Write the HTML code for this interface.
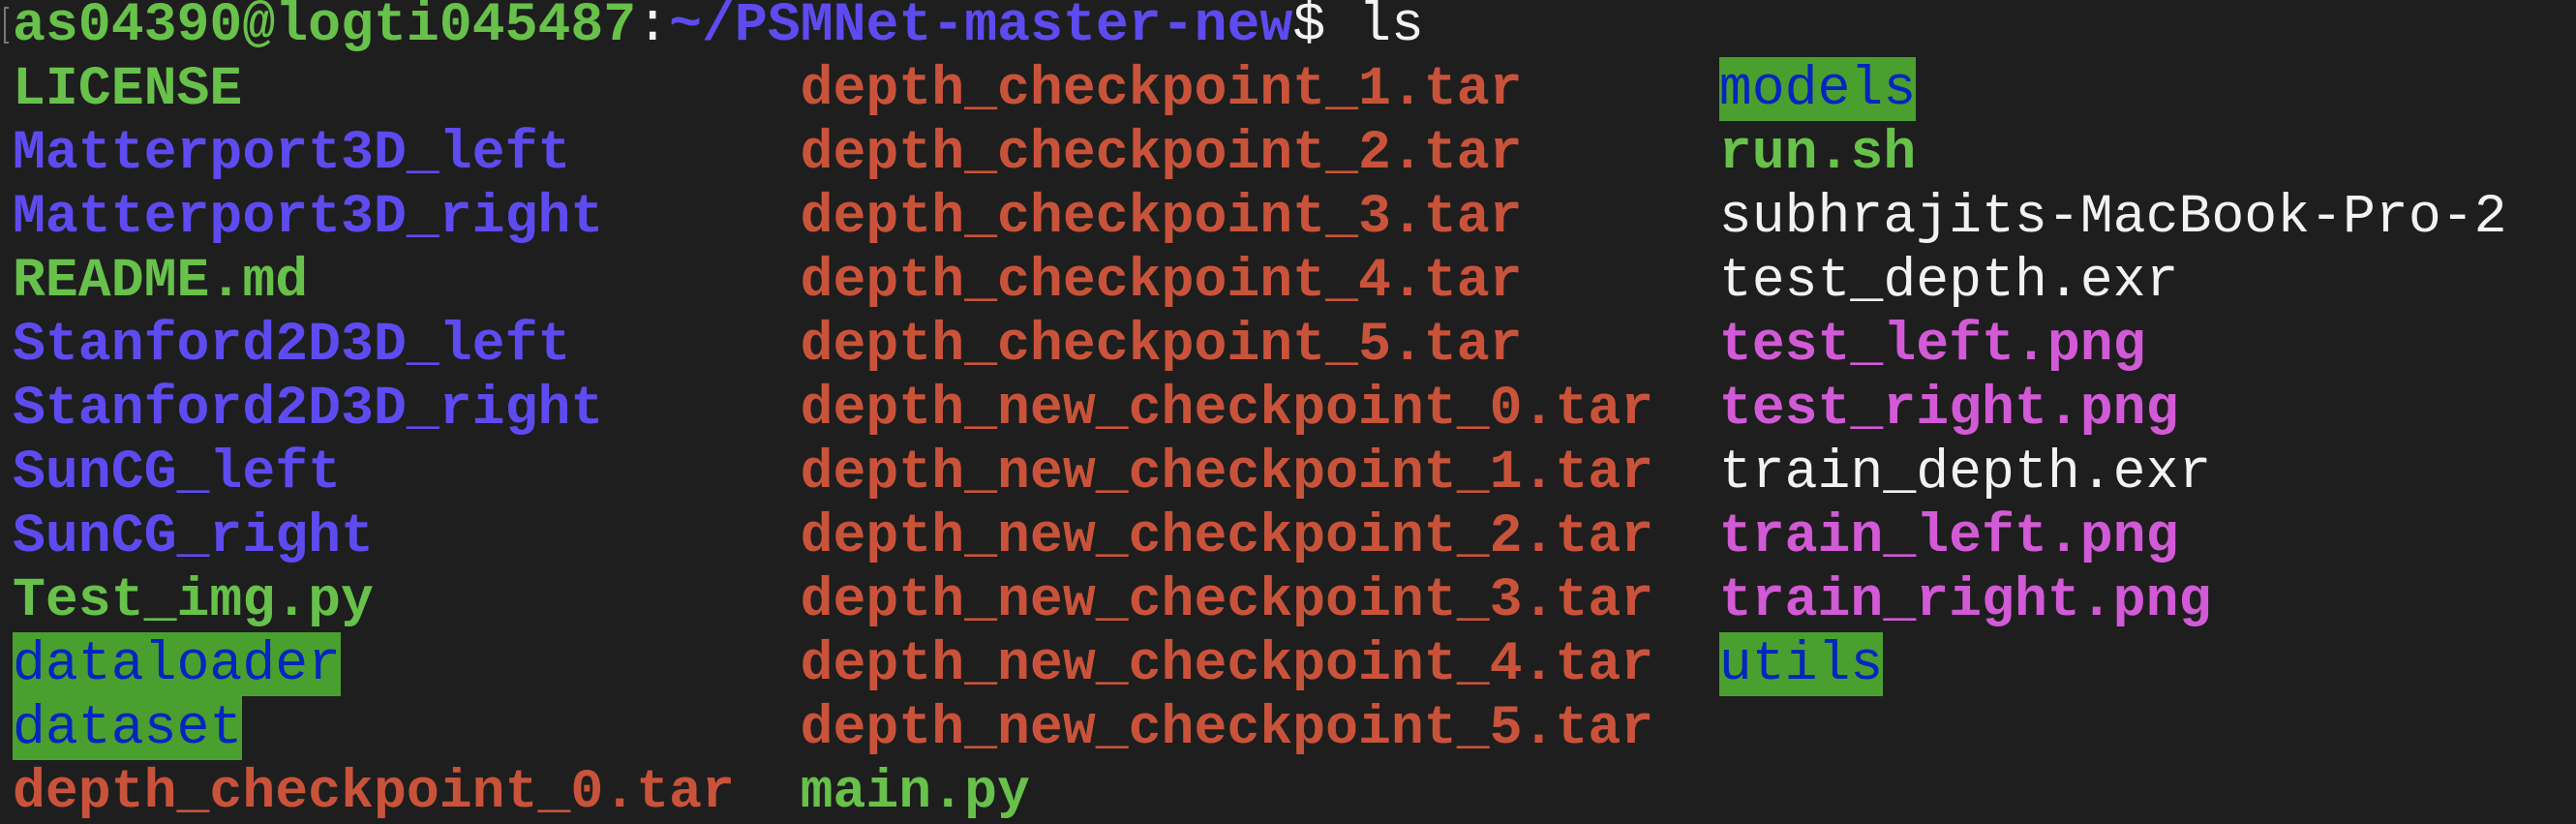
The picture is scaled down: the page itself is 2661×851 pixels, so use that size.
<!DOCTYPE html>
<html><head><meta charset="utf-8"><style>
html,body{margin:0;padding:0;background:#1e1e1e;width:2661px;height:848px;overflow:hidden}
#t{position:absolute;left:13px;top:-7px;font-family:"Liberation Mono",monospace;font-size:56.5px;color:#f2f2f2}
.l{height:66px;line-height:66px;position:relative;white-space:pre}
.c{position:absolute;top:0;height:66px}
.c2{left:813.6px}.c3{left:1762.8px}
.g{color:#67c14a;font-weight:bold}
.p{color:#5e4bf0;font-weight:bold}
.r{color:#c9533a;font-weight:bold}
.m{color:#d25ad6;font-weight:bold}
.d{background:#4aa02f;color:#0525c0;display:inline-block;height:66px;vertical-align:top}
.w{color:#f2f2f2}
#br{position:absolute;left:4px;top:7px;height:38px;border:2px solid #777;border-right:none;box-sizing:border-box;width:5px}
</style></head><body>
<div id="br"></div>
<div id="t"><div class="l"><span class="g">as04390@logti045487</span><span class="w">:</span><span class="p">~/PSMNet-master-new</span><span class="w">$ ls</span></div><div class="l"><span class="c g">LICENSE</span><span class="c c2 r">depth_checkpoint_1.tar</span><span class="c c3"><span class="d">models</span></span></div><div class="l"><span class="c p">Matterport3D_left</span><span class="c c2 r">depth_checkpoint_2.tar</span><span class="c c3 g">run.sh</span></div><div class="l"><span class="c p">Matterport3D_right</span><span class="c c2 r">depth_checkpoint_3.tar</span><span class="c c3 w">subhrajits-MacBook-Pro-2</span></div><div class="l"><span class="c g">README.md</span><span class="c c2 r">depth_checkpoint_4.tar</span><span class="c c3 w">test_depth.exr</span></div><div class="l"><span class="c p">Stanford2D3D_left</span><span class="c c2 r">depth_checkpoint_5.tar</span><span class="c c3 m">test_left.png</span></div><div class="l"><span class="c p">Stanford2D3D_right</span><span class="c c2 r">depth_new_checkpoint_0.tar</span><span class="c c3 m">test_right.png</span></div><div class="l"><span class="c p">SunCG_left</span><span class="c c2 r">depth_new_checkpoint_1.tar</span><span class="c c3 w">train_depth.exr</span></div><div class="l"><span class="c p">SunCG_right</span><span class="c c2 r">depth_new_checkpoint_2.tar</span><span class="c c3 m">train_left.png</span></div><div class="l"><span class="c g">Test_img.py</span><span class="c c2 r">depth_new_checkpoint_3.tar</span><span class="c c3 m">train_right.png</span></div><div class="l"><span class="c"><span class="d">dataloader</span></span><span class="c c2 r">depth_new_checkpoint_4.tar</span><span class="c c3"><span class="d">utils</span></span></div><div class="l"><span class="c"><span class="d">dataset</span></span><span class="c c2 r">depth_new_checkpoint_5.tar</span></div><div class="l"><span class="c r">depth_checkpoint_0.tar</span><span class="c c2 g">main.py</span></div></div>
</body></html>
